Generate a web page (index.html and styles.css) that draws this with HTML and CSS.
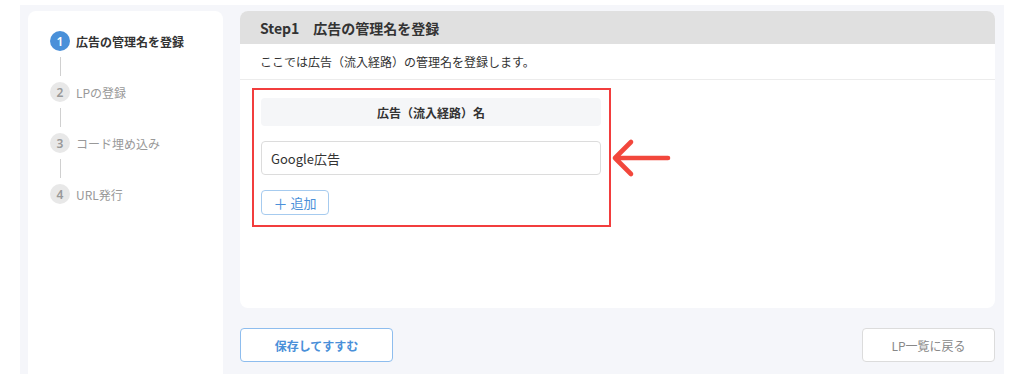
FILE: index.html
```html
<!DOCTYPE html>
<html lang="ja">
<head>
<meta charset="utf-8">
<link rel="stylesheet" href="styles.css">
</head>
<body>
<div class="frame">
  <aside class="side">
    <ol class="steps">
      <li class="step active"><span class="num">1</span><span class="label">広告の管理名を登録</span></li>
      <li class="line"></li>
      <li class="step"><span class="num">2</span><span class="label">LPの登録</span></li>
      <li class="line"></li>
      <li class="step"><span class="num">3</span><span class="label">コード埋め込み</span></li>
      <li class="line"></li>
      <li class="step"><span class="num">4</span><span class="label">URL発行</span></li>
    </ol>
  </aside>
  <main class="main">
    <section class="card">
      <header class="card-head">Step1　広告の管理名を登録</header>
      <p class="card-desc">ここでは広告（流入経路）の管理名を登録します。</p>
      <div class="card-body">
        <div class="highlight">
          <div class="field-head">広告（流入経路）名</div>
          <div class="input">Google広告</div>
          <button class="add"><span class="plus">＋</span>追加</button>
        </div>
        <svg class="arrow" width="62" height="40" viewBox="0 0 62 40">
          <path d="M4 20 H57 M20 4 L4 20 L20 36" fill="none" stroke="#f2473c" stroke-width="4.6" stroke-linecap="round" stroke-linejoin="round"/>
        </svg>
      </div>
    </section>
    <div class="actions">
      <button class="btn primary">保存してすすむ</button>
      <button class="btn secondary">LP一覧に戻る</button>
    </div>
  </main>
</div>
</body>
</html>
```
FILE: styles.css
```css
* { box-sizing: border-box; }
html, body { margin: 0; padding: 0; background: #fff; }
body {
  font-family: "Noto Sans CJK JP", "Noto Sans", sans-serif;
  color: #333;
}
.frame {
  margin: 5px 20px 0 20px;
  height: 369px;
  background: #f5f6fa;
  display: flex;
  gap: 17px;
  padding: 6px 9px 0 8px;
}
.side {
  width: 195px;
  background: #fff;
  border-radius: 8px 8px 0 0;
  padding: 20px 0 0 22px;
}
.steps { list-style: none; margin: 0; padding: 0; }
.step { display: flex; align-items: center; gap: 6px; height: 20px; }
.num {
  width: 20px; height: 20px; border-radius: 50%;
  background: #e8e8e8; color: #999;
  font-size: 12px; font-weight: 600;
  display: flex; align-items: center; justify-content: center;
  font-family: "Noto Sans", sans-serif;
}
.label { font-size: 12px; color: #999; }
.step.active .num { background: #4a90d9; color: #fff; }
.step.active .label { color: #333; font-weight: 700; }
.line {
  width: 1px; height: 19px; background: #d0d0d0;
  margin: 6px 0 6px 9.5px;
}
.main { flex: 1; display: flex; flex-direction: column; }
.card {
  height: 297px;
  background: #fff;
  border-radius: 8px;
  overflow: hidden;
}
.card-head {
  height: 33px;
  background: #e0e0e0;
  padding-left: 20px;
  font-size: 14px; font-weight: 700; color: #333;
  display: flex; align-items: center;
}
.card-desc {
  margin: 0;
  height: 36px;
  padding-left: 20px;
  font-size: 12px; color: #333;
  display: flex; align-items: center;
  border-bottom: 1px solid #ececec;
}
.card-body {
  display: flex; align-items: center;
  padding: 8px 0 0 12px;
}
.highlight {
  width: 359px;
  border: 2px solid #f23d3d;
  padding: 8px 8px 10px 7px;
}
.field-head {
  height: 28px;
  background: #f5f6f8;
  border-radius: 4px;
  font-size: 12px; font-weight: 700; color: #333;
  display: flex; align-items: center; justify-content: center;
}
.input {
  margin-top: 15px;
  height: 34px;
  border: 1px solid #dcdcdc;
  border-radius: 4px;
  padding-left: 9px;
  font-size: 13px; color: #333;
  display: flex; align-items: center;
}
.add {
  margin-top: 15px;
  width: 68px; height: 25px;
  background: #fff;
  border: 1px solid #a6cbef;
  border-radius: 4px;
  color: #4a90d9;
  font-family: inherit; font-size: 13px;
  display: flex; align-items: center; justify-content: center; gap: 3px;
  padding: 0;
}
.plus { font-size: 14px; }
.arrow { margin-left: 0; display: block; }
.actions {
  margin-top: 20px;
  display: flex; justify-content: space-between;
}
.btn {
  height: 34px;
  background: #fff;
  border-radius: 4px;
  font-family: inherit; font-size: 12px;
  padding: 0;
}
.primary {
  width: 153px;
  border: 1px solid #8ebdee;
  color: #4a90d9; font-weight: 700;
}
.secondary {
  width: 133px;
  border: 1px solid #dcdcdc;
  color: #888;
}
```
